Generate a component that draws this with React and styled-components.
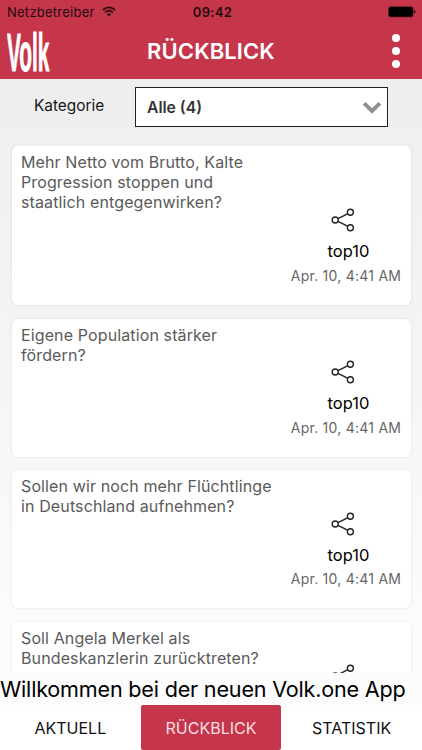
import React from "react";
import styled, { createGlobalStyle } from "styled-components";

const questions = [
  {
    lines: [
      "Mehr Netto vom Brutto, Kalte",
      "Progression stoppen und",
      "staatlich entgegenwirken?",
    ],
    height: 158.6,
  },
  {
    lines: ["Eigene Population stärker", "fördern?"],
    height: 138,
  },
  {
    lines: ["Sollen wir noch mehr Flüchtlinge", "in Deutschland aufnehmen?"],
    height: 138,
  },
  {
    lines: ["Soll Angela Merkel als", "Bundeskanzlerin zurücktreten?"],
    height: 138,
  },
];

const tabs = ["Aktuell", "Rückblick", "Statistik"];

const WifiIcon = () => (
  <svg width="14" height="11" viewBox="0 0 14 11" fill="none" stroke="#250a0f">
    <path d="M1 4Q7 -1.4 13 4" strokeWidth="1.7" />
    <path d="M3.2 6.4Q7 3 10.8 6.4" strokeWidth="1.6" />
    <path d="M4.9 8.2Q7 6.4 9.1 8.2L7 10.4Z" fill="#250a0f" stroke="none" />
  </svg>
);

const BatteryIcon = () => (
  <svg width="28" height="12" viewBox="0 0 28 12">
    <rect x="0.5" y="0.7" width="24.6" height="10.2" rx="2" fill="#000" stroke="#5d1824" strokeWidth="0.7" />
    <path d="M26 4.1Q27.6 4.5 27.6 5.8T26 7.6Z" fill="#250a0f" />
  </svg>
);

const ShareIcon = () => (
  <svg width="24" height="24" viewBox="0 0 24 24" fill="none" stroke="#222" strokeWidth="1.4">
    <path d="M7 10.7L16.6 5.8M7 13.3L16.6 18.2" />
    <circle cx="4.2" cy="12" r="3" />
    <circle cx="19.4" cy="4.2" r="3" />
    <circle cx="19.4" cy="19.8" r="3" />
  </svg>
);

const Logo = () => (
  <svg width="46" height="56" viewBox="0 0 46 56">
    <text
      transform="translate(0 47.5) scale(0.382 1)"
      fontFamily="Liberation Sans, sans-serif"
      fontWeight="700"
      fontSize="54.5"
      fill="#fff"
      stroke="#fff"
      strokeWidth="1"
    >
      Volk
    </text>
  </svg>
);

const App = () => {
  return (
    <Screen>
      <GlobalStyle />
      <Header>
        <StatusBar>
          <Carrier>
            Netzbetreiber
            <WifiIcon />
          </Carrier>
          <Clock>09:42</Clock>
          <BatteryIcon />
        </StatusBar>
        <TitleBar>
          <Logo />
          <h1>RÜCKBLICK</h1>
          <MenuButton aria-label="Menü">
            <span />
            <span />
            <span />
          </MenuButton>
        </TitleBar>
      </Header>
      <Filter>
        <label>Kategorie</label>
        <Select>
          Alle (4)
          <svg width="20" height="14" viewBox="0 0 20 14" fill="none" stroke="#909090" strokeWidth="4">
            <path d="M2.2 3.4L10 11L17.8 3.4" />
          </svg>
        </Select>
      </Filter>
      <List>
        {questions.map((question) => (
          <Card key={question.lines[0]} $height={question.height}>
            <Question>
              {question.lines.map((line) => (
                <span key={line}>{line}</span>
              ))}
            </Question>
            <Meta>
              <ShareIcon />
              <Tag>top10</Tag>
              <time>Apr. 10, 4:41 AM</time>
            </Meta>
          </Card>
        ))}
      </List>
      <Ticker>Willkommen bei der neuen Volk.one App</Ticker>
      <TabBar>
        {tabs.map((tab) => (
          <Tab key={tab} $active={tab === "Rückblick"}>
            {tab}
          </Tab>
        ))}
      </TabBar>
    </Screen>
  );
};

const GlobalStyle = createGlobalStyle`
  * {
    box-sizing: border-box;
  }
  body {
    margin: 0;
    font-family: Inter, "Liberation Sans", sans-serif;
  }
  svg {
    display: block;
    flex-shrink: 0;
  }
`;

const Screen = styled.main`
  display: flex;
  flex-direction: column;
  width: 422px;
  height: 750px;
  overflow: hidden;
  background: linear-gradient(#eeeeee 80px, #fdfdfd 700px);
`;

const Header = styled.header`
  height: 79px;
  flex-shrink: 0;
  background: #c5364b;
`;

const StatusBar = styled.div`
  display: grid;
  grid-template-columns: 1fr auto 1fr;
  align-items: center;
  height: 23px;
  padding: 0 6px 0 7px;
  font-size: 13px;
  color: #250a0f;
  > svg {
    justify-self: end;
  }
`;

const Carrier = styled.div`
  display: flex;
  align-items: center;
  gap: 7px;
  letter-spacing: 0.25px;
`;

const Clock = styled.span`
  padding-left: 2px;
  font-weight: 600;
  letter-spacing: 0.3px;
`;

const TitleBar = styled.div`
  display: grid;
  grid-template-columns: 1fr auto 1fr;
  align-items: center;
  height: 56px;
  padding: 0 22px 0 7px;
  h1 {
    margin: 0 0 0 15px;
    font-size: 22px;
    font-weight: 600;
    letter-spacing: 0.1px;
    color: #fff;
  }
`;

const MenuButton = styled.button`
  display: flex;
  flex-direction: column;
  gap: 4.7px;
  justify-self: end;
  padding: 0;
  border: 0;
  background: none;
  span {
    width: 8px;
    height: 8px;
    border-radius: 50%;
    background: #fff;
  }
`;

const Filter = styled.div`
  display: flex;
  align-items: flex-start;
  height: 67px;
  flex-shrink: 0;
  padding: 8px 34px;
  label {
    width: 101px;
    line-height: 37px;
    font-size: 15.4px;
    color: #151515;
  }
`;

const Select = styled.div`
  display: flex;
  align-items: center;
  justify-content: space-between;
  width: 253px;
  height: 40px;
  padding: 0 5px 0 11px;
  border: 1px solid #222;
  background: #fff;
  font-size: 15.7px;
  font-weight: 600;
  color: #333;
`;

const List = styled.section`
  display: flex;
  flex-direction: column;
  gap: 13.7px;
  flex: 1;
  min-height: 0;
  overflow: hidden;
  padding: 0.4px 11px 0 11.5px;
`;

const Card = styled.article`
  display: flex;
  flex-direction: column;
  justify-content: space-between;
  flex-shrink: 0;
  height: ${(props) => props.$height}px;
  padding: 6px 10px 20px 9.5px;
  border-radius: 6px;
  background: #fff;
  box-shadow: 0 0 2px 1px rgba(0, 0, 0, 0.05);
`;

/* long questions run down beside the meta column */
const Question = styled.div`
  display: flex;
  flex-direction: column;
  height: 30px;
  line-height: 20px;
  font-size: 16px;
  letter-spacing: 0.12px;
  color: #5a5a5a;
  white-space: nowrap;
`;

const Meta = styled.div`
  display: flex;
  flex-direction: column;
  align-items: center;
  align-self: flex-end;
  width: 110px;
  > svg {
    margin: 0 6px 9px 0;
  }
  time {
    line-height: 18px;
    font-size: 14px;
    letter-spacing: 0.24px;
    color: #666;
    white-space: nowrap;
  }
`;

const Tag = styled.span`
  padding-left: 5px;
  margin-bottom: 5.5px;
  line-height: 20px;
  font-size: 16.5px;
  color: #000;
`;

const Ticker = styled.div`
  flex-shrink: 0;
  height: 32px;
  line-height: 33px;
  font-size: 21.6px;
  letter-spacing: -0.2px;
  color: #000;
  background: #fcfcfc;
  white-space: nowrap;
`;

const TabBar = styled.nav`
  display: grid;
  grid-template-columns: repeat(3, 1fr);
  flex-shrink: 0;
  height: 45px;
  background: #fff;
`;

const Tab = styled.button`
  padding: 0;
  border: 0;
  border-radius: 2px;
  font-family: inherit;
  font-size: 16px;
  text-transform: uppercase;
  color: ${(props) => (props.$active ? "#f8dfe3" : "#111")};
  background: ${(props) => (props.$active ? "#c5364b" : "transparent")};
`;

export default App;
